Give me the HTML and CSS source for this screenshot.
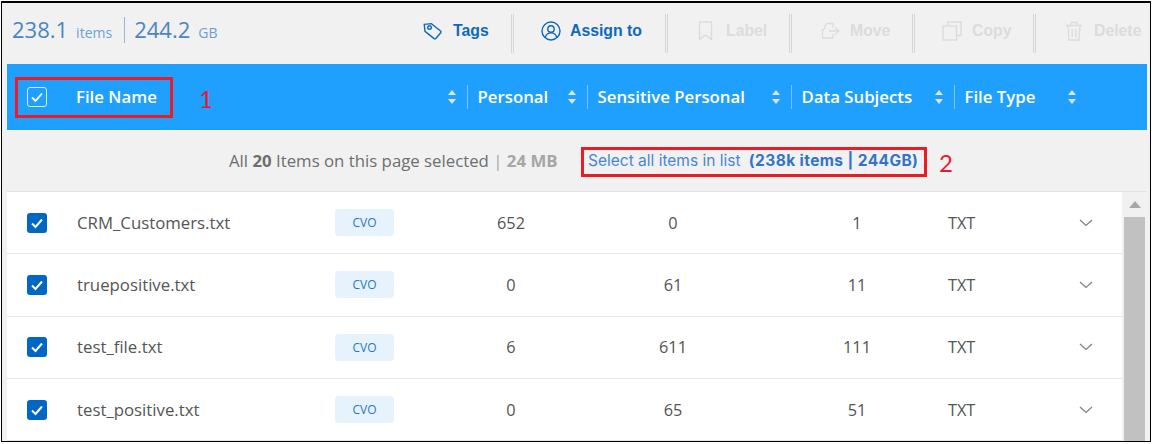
FILE: index.html
```html
<!DOCTYPE html>
<html lang="en">
<head>
<meta charset="utf-8">
<title>Files</title>
<link rel="stylesheet" href="styles.css">
</head>
<body>
<div class="frame">
  <div class="toolbar">
    <div class="stats">
      <span class="big">238.1</span><span class="unit">items</span><span class="stat-sep"></span><span class="big">244.2</span><span class="unit">GB</span>
    </div>
    <div class="actions">
      <div class="action active first">
        <svg class="ico" width="20" height="20" viewBox="0 0 20 20" fill="none" stroke="currentColor" stroke-width="1.4"><path d="M2 2.5h7.2l8.3 8.3a1.2 1.2 0 0 1 0 1.7l-5.5 5.2a1.2 1.2 0 0 1-1.7 0L2 9.5z" transform="rotate(-6 10 10)"/><circle cx="6.5" cy="6.5" r="1.8"/></svg>
        <span>Tags</span>
      </div>
      <div class="action active assign">
        <svg class="ico" width="20" height="20" viewBox="0 0 20 20" fill="none" stroke="currentColor" stroke-width="1.4"><circle cx="10" cy="10" r="9"/><circle cx="10" cy="8" r="3.2"/><path d="M4.2 16.5c.8-3 3-4.6 5.8-4.6s5 1.600 5.800 4.600"/></svg>
        <span>Assign to</span>
      </div>
      <div class="action label">
        <svg class="ico" width="15" height="20" viewBox="0 0 15 20" fill="none" stroke="currentColor" stroke-width="1.4"><path d="M1.500 1h12v17.500l-6-4.500-6 4.500z"/></svg>
        <span>Label</span>
      </div>
      <div class="action move">
        <svg class="ico" width="19" height="18" viewBox="0 0 19 18" fill="none" stroke="currentColor" stroke-width="1.300"><path d="M4 6.500V3.500l2-2h6v4M12 12v4H1.500V8L4 6.500M8 9h9M14 5.500 17.800 9 14 12.500"/></svg>
        <span>Move</span>
      </div>
      <div class="action copy">
        <svg class="ico" width="20" height="20" viewBox="0 0 20 20" fill="none" stroke="currentColor" stroke-width="1.400"><rect x="1" y="5" width="13.500" height="14"/><path d="M5.500 5V1H19v13.500h-4.500"/></svg>
        <span>Copy</span>
      </div>
      <div class="action del">
        <svg class="ico" width="18" height="20" viewBox="0 0 18 20" fill="none" stroke="currentColor" stroke-width="1.300"><path d="M1 4.500h16M6 4.500V1.500h6v3M3 4.500l1 14.500h10l1-14.500M7.200 8v8M10.800 8v8"/></svg>
        <span>Delete</span>
      </div>
    </div>
  </div>

  <div class="thead">
    <div class="th th-name">
      <span class="cb cb-head"><svg width="14" height="12" viewBox="0 0 14 12" fill="none" stroke="#fff" stroke-width="1.800"><path d="M2 6.500 5.500 10 12 2.500"/></svg></span>
      <span class="th-text name-text">File Name</span>
      <span class="sort"></span>
    </div>
    <div class="th"><span class="th-text">Personal</span><span class="sort"></span></div>
    <div class="th"><span class="th-text">Sensitive Personal</span><span class="sort"></span></div>
    <div class="th"><span class="th-text">Data Subjects</span><span class="sort"></span></div>
    <div class="th th-last"><span class="th-text">File Type</span><span class="sort"></span></div>
  </div>

  <div class="selbar">
    <span class="sel-info">All <b>20</b> Items on this page selected <span class="sel-size">| <b>24 MB</b></span></span>
    <span class="sel-link">Select all items in list <b>(238k items | 244GB)</b></span>
  </div>

  <div class="body">
    <div class="rows">
      <div class="row">
        <span class="cb"><svg width="14" height="12" viewBox="0 0 14 12" fill="none" stroke="#fff" stroke-width="2"><path d="M2 6.500 5.500 10 12 2.500"/></svg></span>
        <span class="name">CRM_Customers.txt</span><span class="tagcell"><span class="badge">CVO</span></span>
        <span class="num">652</span><span class="num">0</span><span class="num">1</span><span class="type">TXT</span>
        <svg class="chev" width="14" height="8" viewBox="0 0 14 8" fill="none" stroke="#808080" stroke-width="1.200"><path d="M1 1l6 5.500L13 1"/></svg>
      </div>
      <div class="row">
        <span class="cb"><svg width="14" height="12" viewBox="0 0 14 12" fill="none" stroke="#fff" stroke-width="2"><path d="M2 6.500 5.500 10 12 2.500"/></svg></span>
        <span class="name">truepositive.txt</span><span class="tagcell"><span class="badge">CVO</span></span>
        <span class="num">0</span><span class="num">61</span><span class="num">11</span><span class="type">TXT</span>
        <svg class="chev" width="14" height="8" viewBox="0 0 14 8" fill="none" stroke="#808080" stroke-width="1.200"><path d="M1 1l6 5.500L13 1"/></svg>
      </div>
      <div class="row">
        <span class="cb"><svg width="14" height="12" viewBox="0 0 14 12" fill="none" stroke="#fff" stroke-width="2"><path d="M2 6.500 5.500 10 12 2.500"/></svg></span>
        <span class="name">test_file.txt</span><span class="tagcell"><span class="badge">CVO</span></span>
        <span class="num">6</span><span class="num">611</span><span class="num">111</span><span class="type">TXT</span>
        <svg class="chev" width="14" height="8" viewBox="0 0 14 8" fill="none" stroke="#808080" stroke-width="1.200"><path d="M1 1l6 5.500L13 1"/></svg>
      </div>
      <div class="row">
        <span class="cb"><svg width="14" height="12" viewBox="0 0 14 12" fill="none" stroke="#fff" stroke-width="2"><path d="M2 6.500 5.500 10 12 2.500"/></svg></span>
        <span class="name">test_positive.txt</span><span class="tagcell"><span class="badge">CVO</span></span>
        <span class="num">0</span><span class="num">65</span><span class="num">51</span><span class="type">TXT</span>
        <svg class="chev" width="14" height="8" viewBox="0 0 14 8" fill="none" stroke="#808080" stroke-width="1.200"><path d="M1 1l6 5.500L13 1"/></svg>
      </div>
    </div>
    <div class="scrollbar"><span class="arrow"></span><span class="thumb"></span></div>
  </div>

  <div class="note note-box box-one"></div>
  <div class="note note-num num-one">1</div>
  <div class="note note-box box-two"></div>
  <div class="note note-num num-two">2</div>
</div>
</body>
</html>
```
FILE: styles.css
```css
* { box-sizing: border-box; }
html, body { margin: 0; padding: 0; background: #fff; }
body { width: 1152px; height: 444px; overflow: hidden; padding: 1px 1px 2px 1px; }

.frame {
  position: relative;
  height: 441px;
  width: 1150px;
  border: 1px solid #000;
  border-top-width: 2px;
  background: #f1f1f1;
  padding: 0 3px 0 5px;
  overflow: hidden;
  font-family: "Open Sans", sans-serif;
}

/* toolbar */
.toolbar { height: 61px; display: flex; align-items: flex-start; }
.stats { display: flex; align-items: baseline; padding: 13px 0 0 5px; color: #4a85c4; width: 411px; }
.big { font-size: 22px; line-height: 27px; }
.unit { font-size: 14px; margin-left: 8px; color: #6f9fd2; }
.stat-sep { width: 1px; height: 26px; background: #94b5d8; margin: 0 9px 0 12px; align-self: center; }
.actions { display: flex; margin-top: 11px; height: 39px; flex: 1; font-family: "Liberation Sans", sans-serif; font-weight: 700; font-size: 15.800px; color: #dcdcdc; }
.action { display: flex; align-items: center; gap: 10px; padding-bottom: 5px; border-right: 3px double #d6d6d6; }
.action.active { color: #0f68bf; }
.ico { flex: none; }
.action.first { width: 96px; padding-left: 5px; }
.assign { width: 154px; padding-left: 27px; gap: 9px; }
.label { width: 124px; padding-left: 30px; gap: 13px; }
.move { width: 123px; padding-left: 29px; }
.copy { width: 121px; padding-left: 27px; }
.del { border-right: 0; padding-left: 29px; gap: 11px; }

/* table head */
.thead {
  height: 66px;
  background: #1fa0ff;
  display: grid;
  grid-template-columns: 461px 120px 204px 163px 1fr;
  align-items: center;
  color: #fff;
}
.th { display: flex; align-items: center; height: 24px; padding: 0 11px 0 9.500px; justify-content: space-between; border-right: 1px solid #7cc6fb; }
.th-name { padding-left: 20px; justify-content: flex-start; }
.th-last { border-right: 0; padding-right: 71px; }
.th-text { font-weight: 600; font-size: 16.800px; line-height: 22px; white-space: nowrap; }
.name-text { margin-left: 29px; margin-right: auto; }
.sort { width: 8px; height: 14px; flex: none; position: relative; }
.sort::before, .sort::after {
  content: ""; position: absolute; left: 0; width: 0; height: 0;
  border-left: 4px solid transparent; border-right: 4px solid transparent;
}
.sort::before { top: 0; border-bottom: 5px solid #d9e6f0; }
.sort::after { bottom: 0; border-top: 5px solid #d9e6f0; }

/* checkboxes */
.cb { width: 20px; height: 20px; border-radius: 3px; background: #0067c5; display: flex; align-items: center; justify-content: center; flex: none; }
.cb-head { background: transparent; border: 1px solid #d5edff; }

/* selection bar */
.selbar { height: 62px; display: flex; align-items: center; border-bottom: 1px solid #e2e2e2; padding-left: 222px; }
.sel-info { font-size: 16.800px; color: #6e6e6e; width: 359px; white-space: nowrap; }
.sel-size { color: #a6a6a6; }
.sel-link { font-family: Inter, sans-serif; font-size: 15.500px; color: #4a86d2; white-space: nowrap; }
.sel-link b { color: #3374c8; letter-spacing: 0.400px; margin-left: 4px; }

/* rows */
.body { display: flex; height: 250px; }
.rows { width: 1115px; background: #fff; }
.row {
  height: 62.300px;
  display: grid;
  grid-template-columns: 50px 258px 116px 120px 204px 164px 140px 14px;
  padding-left: 20px;
  align-items: center;
  border-bottom: 1px solid #e6e6e6;
  font-size: 16.300px;
  line-height: 22px;
  color: #555;
}
.name { white-space: nowrap; font-size: 16.800px; }
.badge { display: block; width: 59px; height: 27px; background: #e6f2fc; border-radius: 4px; color: #1f77cc; font-size: 12px; line-height: 27px; text-align: center; }
.num { text-align: center; }
.type { padding-left: 9px; }
.chev { display: block; }

.scrollbar { width: 25px; background: #f1f1f1; display: flex; flex-direction: column; align-items: center; padding-top: 9px; }
.arrow { width: 0; height: 0; border-left: 6px solid transparent; border-right: 6px solid transparent; border-bottom: 7px solid #a8a8a8; }
.thumb { width: 21px; flex: 1; margin-top: 9px; background: #c1c1c1; }

/* red annotations */
.note { position: absolute; }
.note-box { border: 3px solid #ed1c24; }
.box-one { left: 13px; top: 74px; width: 158px; height: 41px; }
.box-two { left: 579px; top: 144px; width: 346px; height: 30px; }
.note-num { font-family: Lato, sans-serif; font-size: 24px; line-height: 28px; color: #e8192c; }
.num-one { left: 197px; top: 82px; }
.num-two { left: 937px; top: 146px; }
```
